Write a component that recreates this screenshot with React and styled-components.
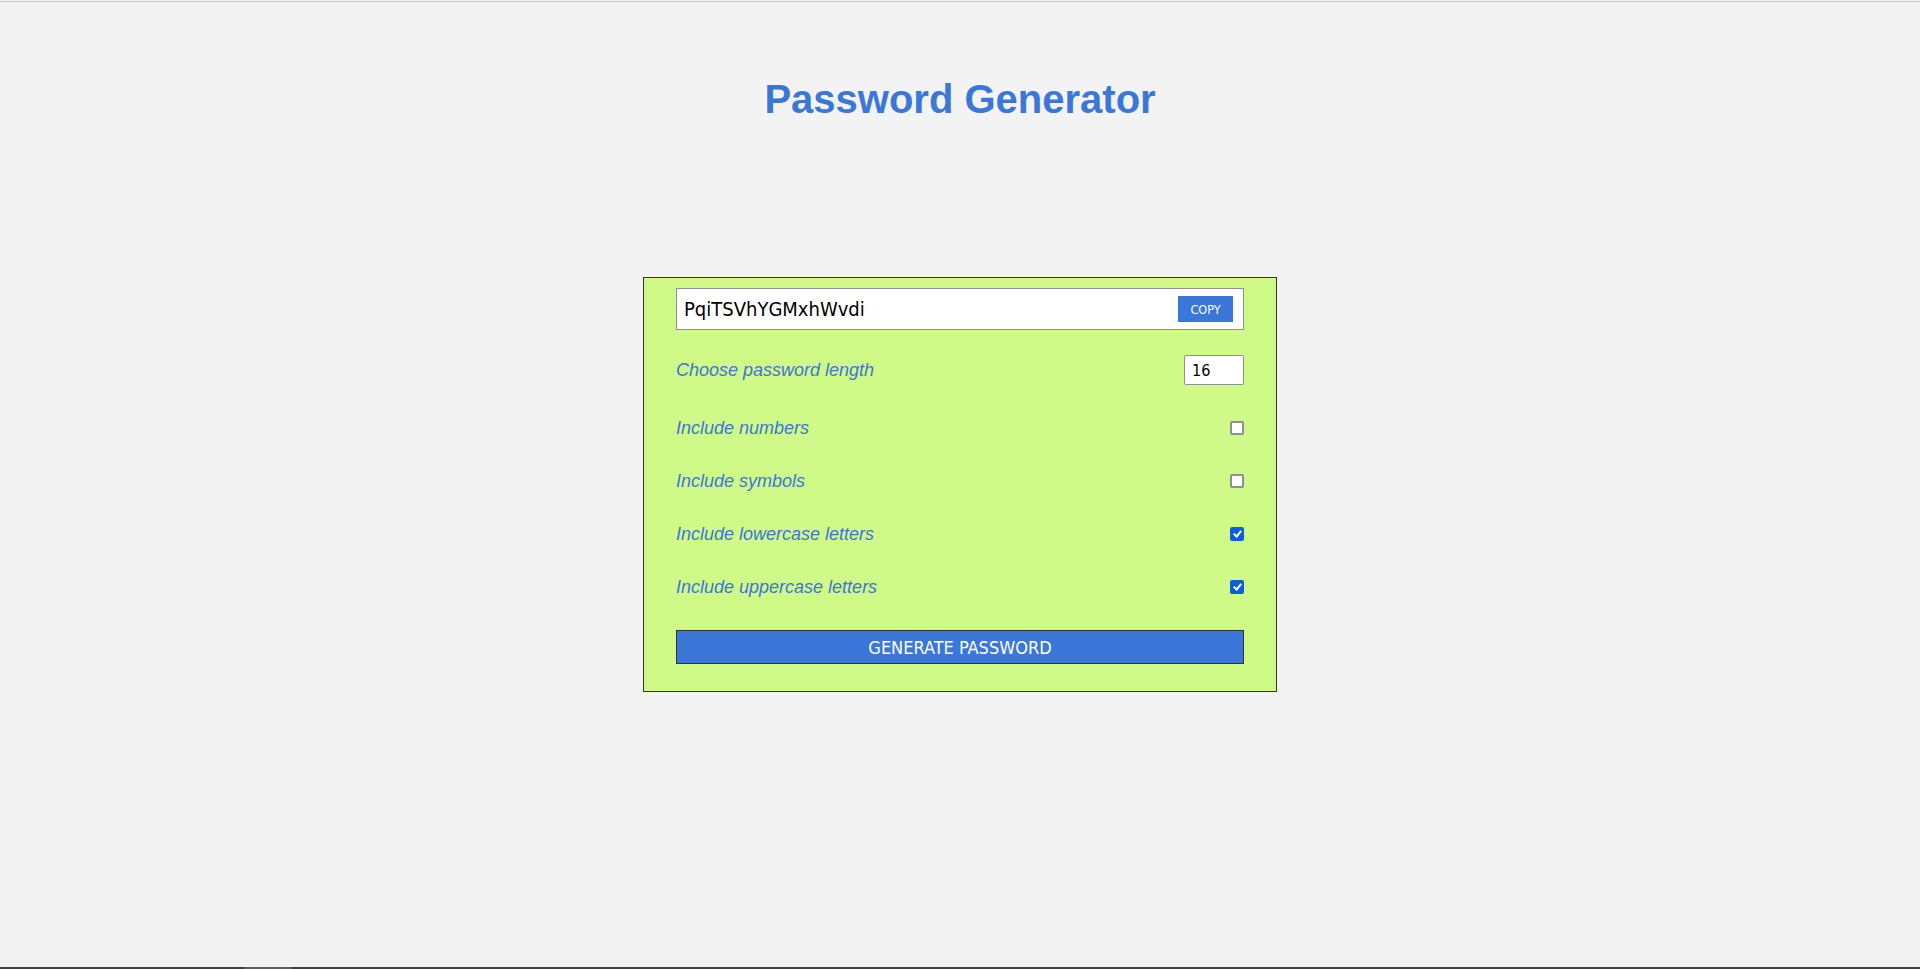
import React, { useState } from 'react';
import styled, { createGlobalStyle } from 'styled-components';

const GlobalStyle = createGlobalStyle`
  html, body {
    margin: 0;
    padding: 0;
    background: #f3f3f3;
    overflow: hidden;
  }
  body {
    font-family: "Liberation Sans", Arial, sans-serif;
  }
`;

const Page = styled.div`
  height: 969px;
  display: flex;
  flex-direction: column;
  align-items: center;
  box-sizing: border-box;
  padding-top: 1px;
`;

const TopEdge = styled.div`
  align-self: stretch;
  height: 1px;
  background: #c8c8c8;
`;

const Title = styled.h1`
  margin: 74px 0 0;
  font-family: "Liberation Sans", Arial, sans-serif;
  font-weight: bold;
  font-size: 40px;
  line-height: 46px;
  color: #3b76d9;
`;

const Card = styled.div`
  margin-top: 155px;
  width: 634px;
  box-sizing: border-box;
  background: #d0fa88;
  border: 1px solid #333;
  padding: 10px 32px 27px;
  display: flex;
  flex-direction: column;
`;

const Output = styled.div`
  height: 42px;
  box-sizing: border-box;
  border: 1px solid #8f8f8f;
  background: #fff;
  display: flex;
  align-items: center;
  padding: 0 10px 0 7px;
`;

const PasswordText = styled.input`
  flex: 1;
  border: none;
  outline: none;
  background: transparent;
  padding: 0;
  font-family: "DejaVu Sans Condensed", "DejaVu Sans", sans-serif;
  font-stretch: condensed;
  font-size: 20px;
  color: #000;
`;

const CopyButton = styled.button`
  width: 55px;
  height: 26px;
  border: none;
  background: #3b76d9;
  color: #fff;
  font-family: "DejaVu Sans Condensed", "DejaVu Sans", sans-serif;
  font-stretch: condensed;
  font-size: 12.5px;
  padding: 0;
  cursor: pointer;
`;

const Row = styled.div`
  display: flex;
  align-items: center;
  justify-content: space-between;
  height: ${p => p.$h || 20}px;
  margin-top: ${p => p.$gap || 33}px;
`;

const Label = styled.label`
  font-family: "Liberation Sans", Arial, sans-serif;
  font-style: italic;
  font-size: 18px;
  color: #3b76d9;
`;

const LengthInput = styled.input`
  width: 60px;
  height: 30px;
  box-sizing: border-box;
  border: 1px solid #8f8f8f;
  border-radius: 2px;
  padding: 0 0 0 7px;
  font-family: "DejaVu Sans Condensed", "DejaVu Sans", sans-serif;
  font-stretch: condensed;
  font-size: 16px;
  color: #000;
  background: #fff;
`;

const Check = styled.input`
  appearance: none;
  -webkit-appearance: none;
  position: relative;
  margin: 0;
  width: 14px;
  height: 14px;
  box-sizing: border-box;
  border: 2px solid #8f8f8f;
  border-radius: 2px;
  background: #fff;

  &:checked {
    border-color: #0b5fdf;
    background: #0b5fdf;
  }
  &:checked::after {
    content: '';
    position: absolute;
    left: 3px;
    top: 0px;
    width: 3px;
    height: 6px;
    border: solid #fff;
    border-width: 0 2px 2px 0;
    transform: rotate(40deg);
  }
`;

const GenerateButton = styled.button`
  margin-top: 33px;
  height: 34px;
  width: 100%;
  box-sizing: border-box;
  border: 1px solid #333;
  background: #3b76d9;
  color: #fff;
  font-family: "DejaVu Sans Condensed", "DejaVu Sans", sans-serif;
  font-stretch: condensed;
  font-size: 18px;
  cursor: pointer;
`;

const Spacer = styled.div`
  flex: 1;
`;

const BottomBar = styled.div`
  align-self: stretch;
  height: 2px;
  background: #404040;
  display: flex;
`;

const BarThumb = styled.div`
  margin-left: 244px;
  width: 48px;
  background: #5e5e5e;
`;

const options = [
  { key: 'numbers', label: 'Include numbers' },
  { key: 'symbols', label: 'Include symbols' },
  { key: 'lower', label: 'Include lowercase letters' },
  { key: 'upper', label: 'Include uppercase letters' },
];

const App = () => {
  const [password] = useState('PqiTSVhYGMxhWvdi');
  const [length, setLength] = useState(16);
  const [flags, setFlags] = useState({ numbers: false, symbols: false, lower: true, upper: true });

  return (
    <>
      <GlobalStyle />
      <Page>
        <TopEdge />
        <Title>Password Generator</Title>
        <Card>
          <Output>
            <PasswordText readOnly value={password} />
            <CopyButton>COPY</CopyButton>
          </Output>
          <Row $h={30} $gap={25}>
            <Label>Choose password length</Label>
            <LengthInput type="text" value={length} onChange={e => setLength(e.target.value)} />
          </Row>
          {options.map(o => (
            <Row key={o.key}>
              <Label>{o.label}</Label>
              <Check
                type="checkbox"
                checked={flags[o.key]}
                onChange={() => setFlags({ ...flags, [o.key]: !flags[o.key] })}
              />
            </Row>
          ))}
          <GenerateButton>GENERATE PASSWORD</GenerateButton>
        </Card>
        <Spacer />
        <BottomBar>
          <BarThumb />
        </BottomBar>
      </Page>
    </>
  );
};

export default App;
